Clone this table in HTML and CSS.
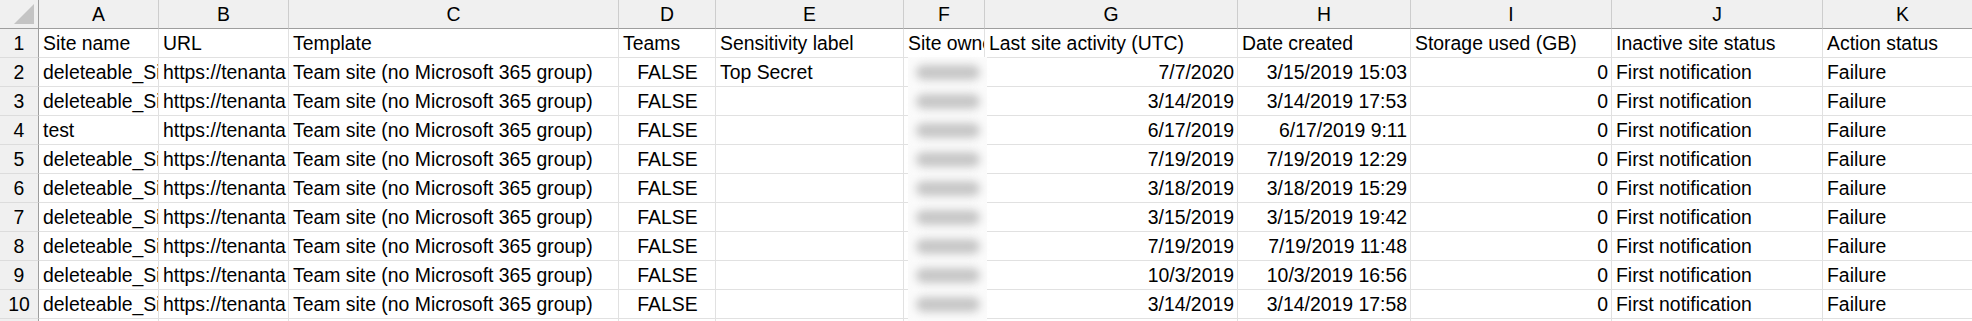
FILE: index.html
```html
<!DOCTYPE html>
<html>
<head>
<meta charset="utf-8">
<link rel="stylesheet" href="styles.css">
</head>
<body>
<div class="sheet">
  <div class="grid">
    <div class="corner"><span class="tri"></span></div>
    <div class="ch">A</div><div class="ch">B</div><div class="ch">C</div><div class="ch">D</div><div class="ch">E</div><div class="ch">F</div><div class="ch">G</div><div class="ch">H</div><div class="ch">I</div><div class="ch">J</div><div class="ch">K</div>

    <div class="rh">1</div>
    <div class="c">Site name</div><div class="c">URL</div><div class="c">Template</div><div class="c">Teams</div><div class="c">Sensitivity label</div><div class="c">Site owner</div><div class="c">Last site activity (UTC)</div><div class="c">Date created</div><div class="c">Storage used (GB)</div><div class="c">Inactive site status</div><div class="c">Action status</div>

    <div class="rh">2</div>
    <div class="c">deleteable_Site</div><div class="c">https://tenanta</div><div class="c">Team site (no Microsoft 365 group)</div><div class="c b">FALSE</div><div class="c">Top Secret</div><div class="c"></div><div class="c r">7/7/2020</div><div class="c r">3/15/2019 15:03</div><div class="c r">0</div><div class="c">First notification</div><div class="c">Failure</div>

    <div class="rh">3</div>
    <div class="c">deleteable_Site</div><div class="c">https://tenanta</div><div class="c">Team site (no Microsoft 365 group)</div><div class="c b">FALSE</div><div class="c"></div><div class="c"></div><div class="c r">3/14/2019</div><div class="c r">3/14/2019 17:53</div><div class="c r">0</div><div class="c">First notification</div><div class="c">Failure</div>

    <div class="rh">4</div>
    <div class="c">test</div><div class="c">https://tenanta</div><div class="c">Team site (no Microsoft 365 group)</div><div class="c b">FALSE</div><div class="c"></div><div class="c"></div><div class="c r">6/17/2019</div><div class="c r">6/17/2019 9:11</div><div class="c r">0</div><div class="c">First notification</div><div class="c">Failure</div>

    <div class="rh">5</div>
    <div class="c">deleteable_Site</div><div class="c">https://tenanta</div><div class="c">Team site (no Microsoft 365 group)</div><div class="c b">FALSE</div><div class="c"></div><div class="c"></div><div class="c r">7/19/2019</div><div class="c r">7/19/2019 12:29</div><div class="c r">0</div><div class="c">First notification</div><div class="c">Failure</div>

    <div class="rh">6</div>
    <div class="c">deleteable_Site</div><div class="c">https://tenanta</div><div class="c">Team site (no Microsoft 365 group)</div><div class="c b">FALSE</div><div class="c"></div><div class="c"></div><div class="c r">3/18/2019</div><div class="c r">3/18/2019 15:29</div><div class="c r">0</div><div class="c">First notification</div><div class="c">Failure</div>

    <div class="rh">7</div>
    <div class="c">deleteable_Site</div><div class="c">https://tenanta</div><div class="c">Team site (no Microsoft 365 group)</div><div class="c b">FALSE</div><div class="c"></div><div class="c"></div><div class="c r">3/15/2019</div><div class="c r">3/15/2019 19:42</div><div class="c r">0</div><div class="c">First notification</div><div class="c">Failure</div>

    <div class="rh">8</div>
    <div class="c">deleteable_Site</div><div class="c">https://tenanta</div><div class="c">Team site (no Microsoft 365 group)</div><div class="c b">FALSE</div><div class="c"></div><div class="c"></div><div class="c r">7/19/2019</div><div class="c r">7/19/2019 11:48</div><div class="c r">0</div><div class="c">First notification</div><div class="c">Failure</div>

    <div class="rh">9</div>
    <div class="c">deleteable_Site</div><div class="c">https://tenanta</div><div class="c">Team site (no Microsoft 365 group)</div><div class="c b">FALSE</div><div class="c"></div><div class="c"></div><div class="c r">10/3/2019</div><div class="c r">10/3/2019 16:56</div><div class="c r">0</div><div class="c">First notification</div><div class="c">Failure</div>

    <div class="rh">10</div>
    <div class="c">deleteable_Site</div><div class="c">https://tenanta</div><div class="c">Team site (no Microsoft 365 group)</div><div class="c b">FALSE</div><div class="c"></div><div class="c"></div><div class="c r">3/14/2019</div><div class="c r">3/14/2019 17:58</div><div class="c r">0</div><div class="c">First notification</div><div class="c">Failure</div>

    <div class="rh"></div>
    <div class="c"></div><div class="c"></div><div class="c"></div><div class="c"></div><div class="c"></div><div class="c"></div><div class="c"></div><div class="c"></div><div class="c"></div><div class="c"></div><div class="c"></div>
  </div>
  <div class="redact">
    <span class="blob"></span><span class="blob"></span><span class="blob"></span><span class="blob"></span><span class="blob"></span><span class="blob"></span><span class="blob"></span><span class="blob"></span><span class="blob"></span>
  </div>
</div>
</body>
</html>
```
FILE: styles.css
```css
html, body {
  margin: 0;
  padding: 0;
  background: #ffffff;
  overflow: hidden;
}
.sheet {
  position: relative;
  width: 1972px;
  height: 321px;
  overflow: hidden;
  font-family: "Liberation Sans", Arial, sans-serif;
  font-size: 19.4px;
  color: #000;
}
.grid {
  display: grid;
  grid-template-columns: 39px 120px 130px 330px 97px 188px 81px 253px 173px 201px 211px 160px;
  grid-template-rows: 29px repeat(11, 29px);
}
.grid > div {
  box-sizing: border-box;
  white-space: nowrap;
  overflow: hidden;
  line-height: 28px;
}
.corner {
  background: #f0f0f0;
  border-right: 1px solid #9e9e9e;
  border-bottom: 1px solid #9e9e9e;
  position: relative;
}
.tri {
  position: absolute;
  right: 4px;
  bottom: 4px;
  width: 0;
  height: 0;
  border-left: 20px solid transparent;
  border-bottom: 20px solid #c4c4c4;
}
.ch {
  background: #f0f0f0;
  border-right: 1px solid #cdcdcd;
  border-bottom: 1px solid #9e9e9e;
  text-align: center;
}
.rh {
  background: #f0f0f0;
  border-right: 1px solid #9e9e9e;
  border-bottom: 1px solid #dcdcdc;
  text-align: center;
}
.c {
  background: #fff;
  border-right: 1px solid #e1e1e1;
  border-bottom: 1px solid #e1e1e1;
  padding: 0 3px 0 4px;
}
.c.r {
  text-align: right;
}
.c.b {
  text-align: center;
}
.redact {
  position: absolute;
  left: 908px;
  top: 57px;
  width: 79px;
  height: 264px;
  background: #fbfbfb;
  display: flex;
  flex-direction: column;
  align-items: center;
  padding-top: 8px;
  box-sizing: border-box;
  gap: 14px;
}
.blob {
  display: block;
  width: 64px;
  height: 15px;
  border-radius: 8px;
  background: #c6c6c6;
  filter: blur(4px);
}
```
